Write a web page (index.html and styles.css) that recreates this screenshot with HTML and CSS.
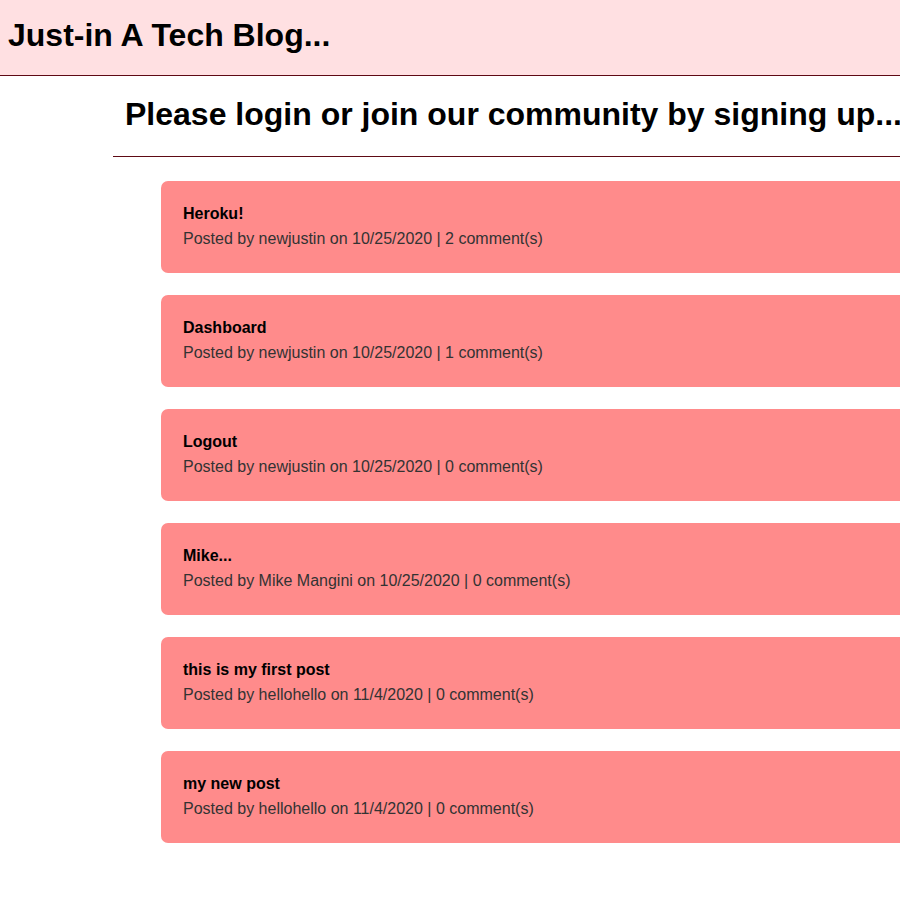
FILE: index.html
```html
<!DOCTYPE html>
<html>
<head>
<meta charset="utf-8">
<title>Just-in A Tech Blog</title>
<link rel="stylesheet" href="styles.css">
</head>
<body>
<header class="site-header">
  <h1 class="site-title">Just-in A Tech Blog...</h1>
</header>
<main class="main">
  <h2 class="page-heading">Please login or join our community by signing up...</h2>
  <section class="posts">
    <article class="post">
      <h3 class="post-title">Heroku!</h3>
      <p class="post-meta">Posted by newjustin on 10/25/2020 | 2 comment(s)</p>
    </article>
    <article class="post">
      <h3 class="post-title">Dashboard</h3>
      <p class="post-meta">Posted by newjustin on 10/25/2020 | 1 comment(s)</p>
    </article>
    <article class="post">
      <h3 class="post-title">Logout</h3>
      <p class="post-meta">Posted by newjustin on 10/25/2020 | 0 comment(s)</p>
    </article>
    <article class="post">
      <h3 class="post-title">Mike...</h3>
      <p class="post-meta">Posted by Mike Mangini on 10/25/2020 | 0 comment(s)</p>
    </article>
    <article class="post">
      <h3 class="post-title">this is my first post</h3>
      <p class="post-meta">Posted by hellohello on 11/4/2020 | 0 comment(s)</p>
    </article>
    <article class="post">
      <h3 class="post-title">my new post</h3>
      <p class="post-meta">Posted by hellohello on 11/4/2020 | 0 comment(s)</p>
    </article>
  </section>
</main>
</body>
</html>
```
FILE: styles.css
```css
html, body {
  margin: 0;
  padding: 0;
  overflow: hidden;
  background: #ffffff;
  font-family: "Liberation Sans", Arial, Helvetica, sans-serif;
  color: #000;
}

.site-header {
  background: #ffe0e2;
  padding: 17px 8px 21px;
  border-bottom: 1px solid #5e0a14;
}

.site-title {
  margin: 0;
  font-size: 32px;
  font-weight: bold;
  line-height: normal;
}

.main {
  margin-left: 113px;
  margin-right: -60px;
  padding-top: 20px;
}

.page-heading {
  margin: 0;
  padding: 0 0 23px 12px;
  font-size: 32px;
  font-weight: bold;
  line-height: normal;
  border-bottom: 1px solid #5e0a14;
}

.posts {
  display: flex;
  flex-direction: column;
  gap: 22px;
  padding: 24px 0 0 48px;
}

.post {
  background: #ff8b8b;
  border-radius: 7px;
  padding: 24px 22px 24px;
  display: flex;
  flex-direction: column;
  gap: 7px;
  height: 92px;
  box-sizing: border-box;
}

.post-title {
  margin: 0;
  font-size: 16px;
  font-weight: bold;
  line-height: normal;
  color: #000;
}

.post-meta {
  margin: 0;
  font-size: 16px;
  line-height: normal;
  color: #333333;
}
```
